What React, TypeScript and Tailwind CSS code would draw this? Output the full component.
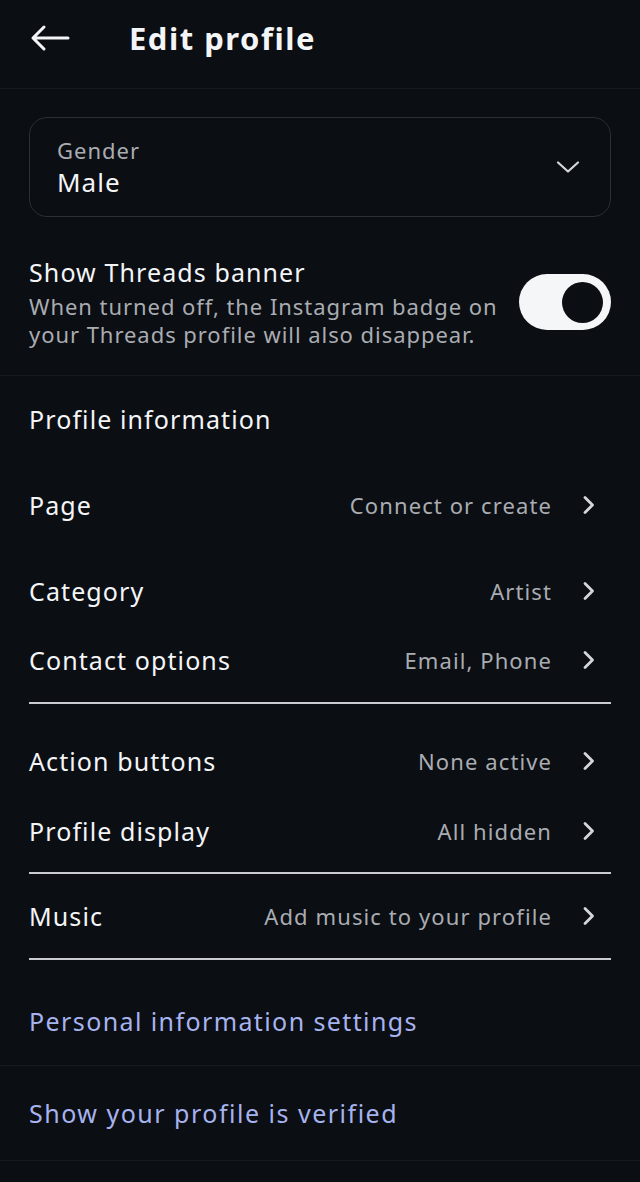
import React from "react";

function ChevronRight() {
  return (
    <svg width="14" height="20" viewBox="0 0 14 20" fill="none" className="shrink-0">
      <path d="M3 2.5 L10.5 10 L3 17.5" stroke="#d4d6d9" strokeWidth="2.8" strokeLinecap="round" strokeLinejoin="round" />
    </svg>
  );
}

function Row({
  label,
  value,
  className,
}: {
  label: string;
  value: string;
  className: string;
}) {
  return (
    <div className={`flex items-center justify-between pl-[29px] pr-[44px] ${className}`}>
      <span className="text-[25px] leading-8 tracking-[1.1px] text-[#f3f5f7]">{label}</span>
      <div className="flex items-center gap-[30px]">
        <span className="text-[22px] leading-7 tracking-[1.1px] text-[#a9acb1]">{value}</span>
        <ChevronRight />
      </div>
    </div>
  );
}

export default function App() {
  return (
    <div
      className="min-h-[1182px] w-[640px] bg-[#0b0e13] text-[#f3f5f7]"
      style={{ fontFamily: "'Noto Sans', Roboto, sans-serif" }}
    >
      {/* header */}
      <div className="flex h-[89px] items-start border-b border-[#161a1f] pt-[20px]">
        <div className="flex h-9 w-[129px] items-center pl-[30px]">
          <svg width="40" height="28" viewBox="0 0 40 28" fill="none">
            <path d="M38 14 H3 M14 3 L3 14 L14 25" stroke="#f3f5f7" strokeWidth="3" strokeLinecap="round" strokeLinejoin="round" />
          </svg>
        </div>
        <h1 className="text-[31px] font-bold leading-9 tracking-[1.5px]">Edit profile</h1>
      </div>

      {/* gender */}
      <div className="mx-[29px] mt-[28px] flex h-[100px] items-center justify-between rounded-[18px] border border-[#2b2f36] pl-[27px] pr-[30px]">
        <div className="flex flex-col">
          <span className="text-[22px] leading-7 tracking-[1px] text-[#a9acb1]">Gender</span>
          <span className="mt-[2px] text-[26px] leading-8 tracking-[1px] text-[#f3f5f7]">Male</span>
        </div>
        <svg width="24" height="14" viewBox="0 0 24 14" fill="none">
          <path d="M2 2.5 L12 11.5 L22 2.5" stroke="#d4d6d9" strokeWidth="2.2" strokeLinecap="round" strokeLinejoin="round" />
        </svg>
      </div>

      {/* threads banner */}
      <div className="flex items-center justify-between border-b border-[#161a1f] pb-[27px] pl-[29px] pr-[29px] pt-[39px]">
        <div className="flex flex-col">
          <span className="text-[25px] leading-8 tracking-[1.1px]">Show Threads banner</span>
          <span className="mt-[4px] text-[22px] leading-7 tracking-[0.95px] text-[#a9acb1]">
            When turned off, the Instagram badge on
            <br />
            your Threads profile will also disappear.
          </span>
        </div>
        <div className="flex h-[56px] w-[92px] shrink-0 items-center justify-end rounded-full bg-[#f5f6f7] pr-[8px]">
          <div className="h-[41px] w-[41px] rounded-full bg-[#0b0e13]" />
        </div>
      </div>

      {/* profile information */}
      <div className="flex h-[86px] items-center pl-[29px]">
        <span className="text-[25px] leading-8 tracking-[1.1px]">Profile information</span>
      </div>
      <Row label="Page" value="Connect or create" className="h-[86px]" />
      <Row label="Category" value="Artist" className="h-[86px]" />
      <Row label="Contact options" value="Email, Phone" className="h-[52px]" />
      <div className="mx-[29px] mt-[16px] h-[2px] bg-[#c9cbce]" />

      <Row label="Action buttons" value="None active" className="mt-[22px] h-[70px]" />
      <Row label="Profile display" value="All hidden" className="h-[70px]" />
      <div className="mx-[29px] mt-[6px] h-[2px] bg-[#c9cbce]" />

      <Row label="Music" value="Add music to your profile" className="h-[84px]" />
      <div className="mx-[29px] h-[2px] bg-[#c9cbce]" />

      <div className="flex h-[106px] items-center border-b border-[#161a1f] pl-[29px] pt-[16px]">
        <span className="text-[25px] leading-8 tracking-[1.4px] text-[#a7b3ee]">Personal information settings</span>
      </div>
      <div className="flex h-[95px] items-center border-b border-[#161a1f] pl-[29px]">
        <span className="text-[25px] leading-8 tracking-[1.5px] text-[#a7b3ee]">Show your profile is verified</span>
      </div>
    </div>
  );
}
